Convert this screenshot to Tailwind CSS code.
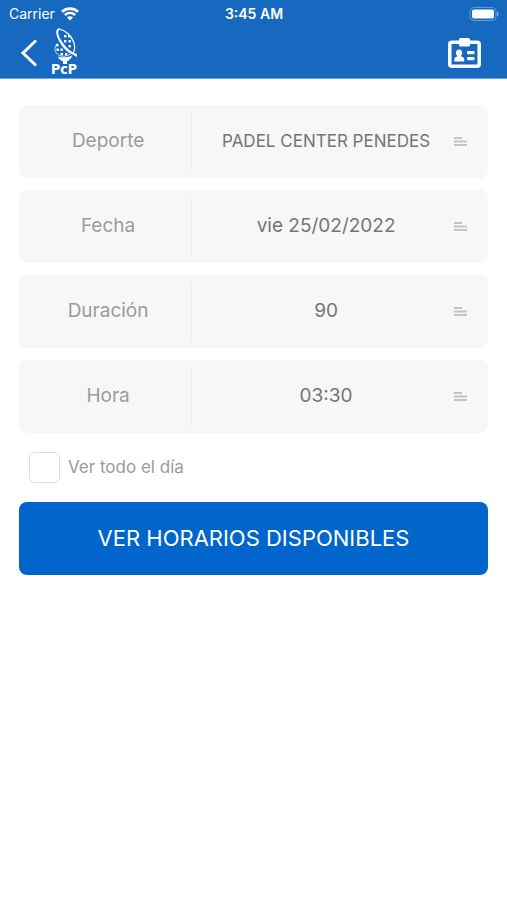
<!DOCTYPE html>
<html lang="es">
<head>
  <meta charset="UTF-8">
  <meta name="viewport" content="width=device-width, initial-scale=1.0">
  <title>Padel Center Penedes</title>
  <script src="https://cdn.jsdelivr.net/npm/@tailwindcss/browser@4"></script>
</head>
<body class="min-h-screen bg-white font-[Inter,sans-serif]">

  <header class="bg-[#1669bf] border-b border-[#5ba5e6] text-white">
    <!-- Status bar -->
    <div class="grid grid-cols-3 items-center h-7 pl-[9px] pr-2 text-sm">
      <div class="flex items-center gap-1.5">
        <span>Carrier</span>
        <svg class="w-[18px] h-[14px]" viewBox="0 0 18 14" fill="none" stroke="currentColor" stroke-width="2.6">
          <path d="M1 4.8C5.6.6 12.4.6 17 4.8"/>
          <path d="M3.9 8C6.9 5.3 11.1 5.3 14.1 8"/>
          <path d="M9 13.5 6 10.4C7.7 8.9 10.3 8.9 12 10.4Z" fill="currentColor" stroke="none"/>
        </svg>
      </div>
      <span class="text-center font-semibold">3:45 AM</span>
      <svg class="justify-self-end w-[30px] h-[14px]" viewBox="0 0 30 14">
        <rect x="1" y=".5" width="26" height="13" rx="4" fill="none" stroke="#5f9bd8"/>
        <rect x="3" y="2.5" width="22" height="9" rx="2" fill="#fff"/>
        <path d="M28 4.5c2 .8 2 4.2 0 5z" fill="#7fb0e2"/>
      </svg>
    </div>

    <!-- Nav bar -->
    <nav class="flex items-center h-[50px] pl-5 pr-[26px]">
      <a href="#" aria-label="Volver">
        <svg class="w-[18px] h-7" viewBox="0 0 18 28" fill="none" stroke="currentColor" stroke-width="3">
          <path d="M16 1.5 3 14 16 26.5"/>
        </svg>
      </a>
      <a href="#" class="ml-2.5" aria-label="PCP">
        <svg class="w-8 h-[50px]" viewBox="-2 0 32 50" fill="#fff">
          <path d="M10.5.8C5.5-1 5 5 8.500 12c3.500 7 9 12.500 14 14.500l4.500 2.500V26l-4-1.500C18 21.500 13.500 16.500 10.300 11 8 6.500 7 2.500 10.500.8Z"/>
          <path d="M9 1c6 1 12 6 14.500 12.500 1.700 4.500 1.500 9-.8 12" fill="none" stroke="#fff" stroke-width="1.2"/>
          <path d="M8 15.500C5 17 4.500 20.500 5.500 23.500c1.500 4 6 5.500 10 4.500 2.500-.5 4.500-1.500 6-2.500" fill="none" stroke="#fff" stroke-width=".7"/>
          <path d="M8 28.500c4 1.500 10 1 14-1-.5 3.500-3 4.500-5 6V36h-4v-2.500C10.500 32 8.500 31 8 28.500Z"/>
          <g>
            <rect x="14" y="7" width="2.4" height="2.4"/>
            <rect x="18" y="7" width="2.4" height="2.4"/>
            <rect x="14" y="12" width="2.4" height="2.4"/>
            <rect x="18.5" y="12" width="2.4" height="2.4"/>
            <rect x="18.5" y="17" width="2.4" height="2.4"/>
            <rect x="6" y="16" width="2.4" height="2.4"/>
            <rect x="6.5" y="20.5" width="2.4" height="2.4"/>
            <rect x="10.5" y="20.5" width="2.4" height="2.4"/>
            <rect x="10.5" y="25" width="2.4" height="2.4"/>
            <rect x="15" y="25" width="2.4" height="2.4"/>
          </g>
          <text x="14" y="46" text-anchor="middle" class="font-['DejaVu_Sans_Condensed','DejaVu_Sans',sans-serif] text-[14px] font-bold">PcP</text>
        </svg>
      </a>
      <button type="button" class="ml-auto" aria-label="Carnet">
        <svg class="w-[33px] h-[30px]" viewBox="0 0 33 30" fill="#fff">
          <rect x="1.8" y="4.3" width="29.4" height="24" rx="2" fill="none" stroke="#fff" stroke-width="3.5"/>
          <rect x="11" y="0" width="11" height="8.5" rx="1.5"/>
          <path d="M11 11.500c2 0 3.200 1.400 3.200 3.300 0 1.500-.6 2.700-1.500 3.400 2.300.6 3.600 1.800 3.600 3.600v1.700H6.300v-1.700c0-1.800 1.200-3 3.300-3.600-1-.7-1.700-1.900-1.700-3.400 0-1.900 1.200-3.300 3.100-3.300Z"/>
          <rect x="19" y="13" width="7.5" height="3.2" rx="1"/>
          <rect x="19" y="19" width="7.5" height="3.2" rx="1"/>
        </svg>
      </button>
    </nav>
  </header>

  <form class="px-[19px] pt-[26px]">
    <div class="flex flex-col gap-3">
      <div class="relative flex items-center h-[73px] rounded-lg bg-[#f7f7f7]">
        <label for="deporte" class="w-[35%] pl-3.5 text-center text-[19px] text-[#9b9b9b]">Deporte</label>
        <div class="flex-1 min-w-0 h-[58px] ml-2 border-l border-[#ececec]">
          <select id="deporte" class="appearance-none w-full h-full pr-7 text-center text-[17px] text-[#757575]">
            <option>PADEL CENTER PENEDES</option>
          </select>
        </div>
        <svg class="absolute right-[21px] w-[13px] h-[9px] pointer-events-none" viewBox="0 0 13 9" fill="#c4c4c4">
          <path d="M0 0h8v2H0zM0 3.500h13v2H0zM0 7h13v2H0z"/>
        </svg>
      </div>

      <div class="relative flex items-center h-[73px] rounded-lg bg-[#f7f7f7]">
        <label for="fecha" class="w-[35%] pl-3.5 text-center text-[19px] text-[#9b9b9b]">Fecha</label>
        <div class="flex-1 min-w-0 h-[58px] ml-2 border-l border-[#ececec]">
          <select id="fecha" class="appearance-none w-full h-full pr-7 text-center text-[19px] text-[#757575]">
            <option>vie 25/02/2022</option>
          </select>
        </div>
        <svg class="absolute right-[21px] w-[13px] h-[9px] pointer-events-none" viewBox="0 0 13 9" fill="#c4c4c4">
          <path d="M0 0h8v2H0zM0 3.500h13v2H0zM0 7h13v2H0z"/>
        </svg>
      </div>

      <div class="relative flex items-center h-[73px] rounded-lg bg-[#f7f7f7]">
        <label for="duracion" class="w-[35%] pl-3.5 text-center text-[19px] text-[#9b9b9b]">Duración</label>
        <div class="flex-1 min-w-0 h-[58px] ml-2 border-l border-[#ececec]">
          <select id="duracion" class="appearance-none w-full h-full pr-7 text-center text-[19px] text-[#757575]">
            <option>90</option>
          </select>
        </div>
        <svg class="absolute right-[21px] w-[13px] h-[9px] pointer-events-none" viewBox="0 0 13 9" fill="#c4c4c4">
          <path d="M0 0h8v2H0zM0 3.500h13v2H0zM0 7h13v2H0z"/>
        </svg>
      </div>

      <div class="relative flex items-center h-[73px] rounded-lg bg-[#f7f7f7]">
        <label for="hora" class="w-[35%] pl-3.5 text-center text-[19px] text-[#9b9b9b]">Hora</label>
        <div class="flex-1 min-w-0 h-[58px] ml-2 border-l border-[#ececec]">
          <select id="hora" class="appearance-none w-full h-full pr-7 text-center text-[19px] text-[#757575]">
            <option>03:30</option>
          </select>
        </div>
        <svg class="absolute right-[21px] w-[13px] h-[9px] pointer-events-none" viewBox="0 0 13 9" fill="#c4c4c4">
          <path d="M0 0h8v2H0zM0 3.500h13v2H0zM0 7h13v2H0z"/>
        </svg>
      </div>
    </div>

    <div class="flex items-center gap-2 my-[19px] pl-2.5">
      <input id="todo" type="checkbox" class="appearance-none w-[31px] h-[31px] rounded-md border border-[#dcdcdc] bg-white checked:bg-[#0066cc]">
      <label for="todo" class="text-[17px] text-[#9b9b9b]">Ver todo el día</label>
    </div>

    <button type="submit" class="w-full h-[73px] rounded-lg bg-[#0066cc] text-[22px] text-white">VER HORARIOS DISPONIBLES</button>
  </form>

</body>
</html>
